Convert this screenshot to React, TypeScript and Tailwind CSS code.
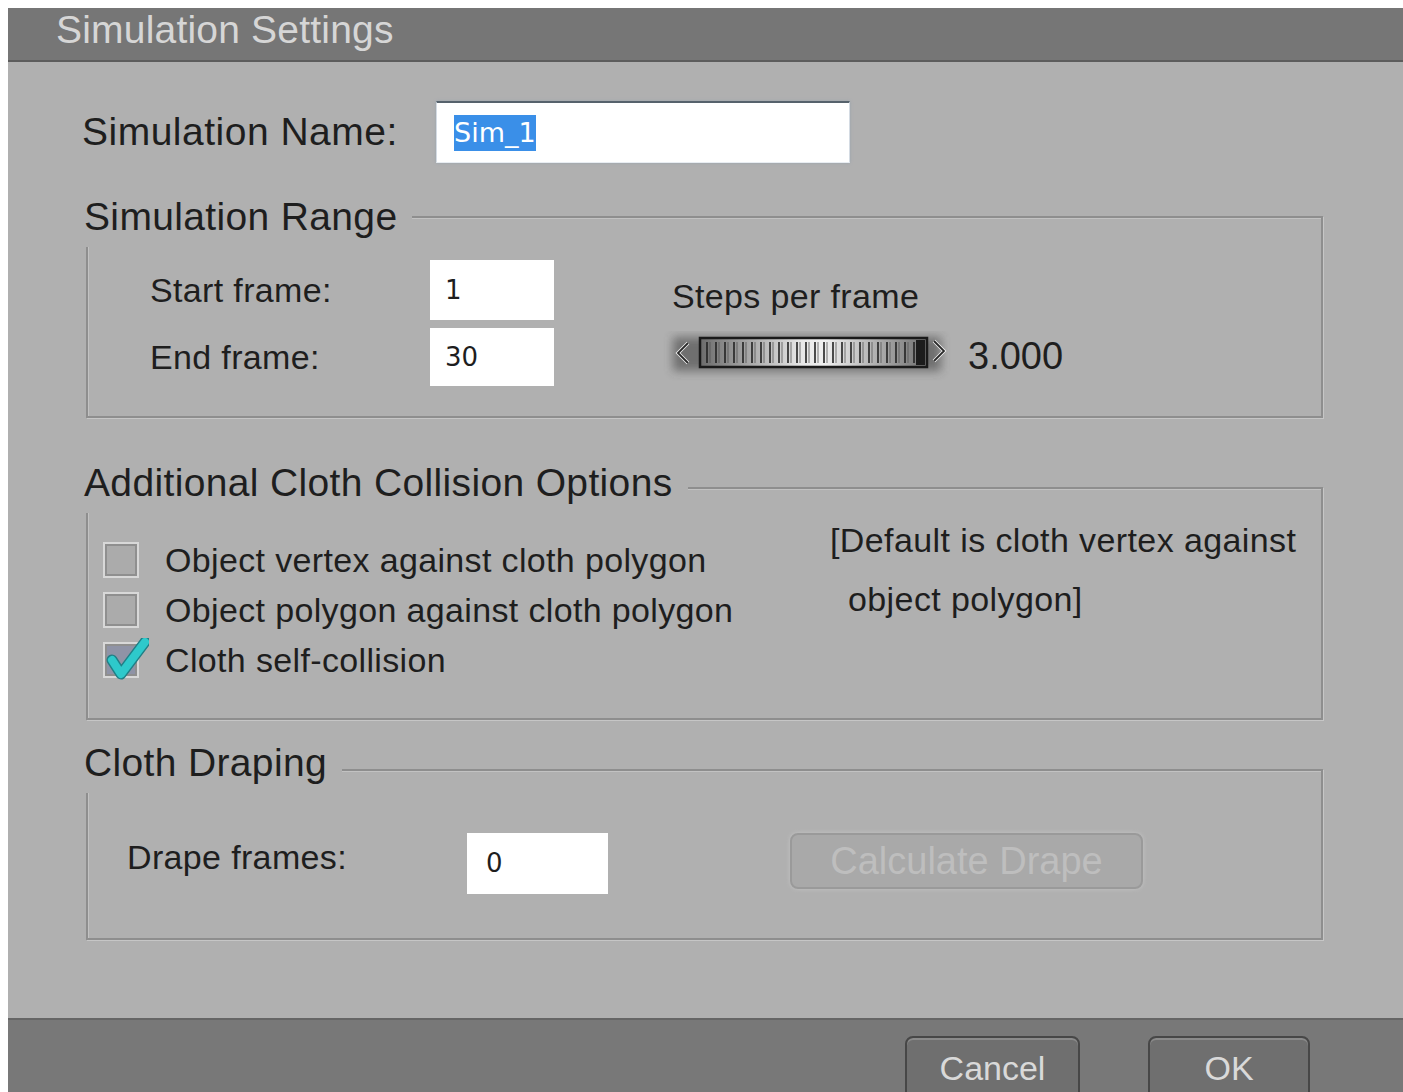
import React from "react"

const sans = "font-['Liberation_Sans',Arial,sans-serif]"
const field = "font-['DejaVu_Sans','Liberation_Sans',sans-serif]"

function GroupBox({
  title,
  titleTop,
  className,
  children,
}: {
  title: string
  titleTop: string
  className: string
  children: React.ReactNode
}) {
  return (
    <div
      className={`relative ml-[78px] w-[1237px] border-2 border-[#8e8e8e] shadow-[1px_1px_0_#c6c6c6,inset_1px_1px_0_#c2c2c2] ${className}`}
    >
      <span
        className={`absolute left-[-4px] ${titleTop} bg-[#b0b0b0] pr-[15px] pb-[8px] text-[39px] leading-[44px] tracking-[0.35px] text-[#1e1e1e]`}
      >
        {title}
      </span>
      {children}
    </div>
  )
}

function CheckBox({ checked }: { checked?: boolean }) {
  return (
    <div className="relative h-[36px] w-[36px] shrink-0">
      <div
        className={`h-full w-full border-2 border-[#d8d8d8] shadow-[inset_0_0_0_2px_#8f8f8f] ${
          checked ? "bg-[#8f93a6]" : "bg-[#ababab]"
        }`}
      />
      {checked && (
        <svg className="absolute left-[2px] top-[-4px]" width="44" height="42" viewBox="0 0 44 42">
          <path
            d="M7 22 L16 36 L40 4"
            fill="none"
            stroke="#1f7f86"
            strokeWidth="11"
            strokeLinecap="round"
            strokeLinejoin="round"
          />
          <path
            d="M7 22 L16 36 L40 4"
            fill="none"
            stroke="#2ec9cb"
            strokeWidth="8"
            strokeLinecap="round"
            strokeLinejoin="round"
          />
        </svg>
      )}
    </div>
  )
}

// ridged thumbwheel used for the steps-per-frame value
function StepWheel() {
  const ticks = Array.from({ length: 24 }, (_, i) => 52 + i * 9)
  return (
    <svg width="300" height="50" viewBox="0 0 300 50">
      <defs>
        <filter id="wheelBlur" x="-20%" y="-50%" width="140%" height="200%">
          <feGaussianBlur stdDeviation="5" />
        </filter>
        <linearGradient id="wheelFill" x1="0" x2="1" y1="0" y2="0">
          <stop offset="0" stopColor="#6c6c6c" />
          <stop offset="0.45" stopColor="#e8e8e8" />
          <stop offset="0.55" stopColor="#f0f0f0" />
          <stop offset="1" stopColor="#707070" />
        </linearGradient>
        <linearGradient id="wheelShine" x1="0" x2="1" y1="0" y2="0">
          <stop offset="0" stopColor="#ffffff" stopOpacity="0" />
          <stop offset="0.15" stopColor="#ffffff" stopOpacity="0.9" />
          <stop offset="0.85" stopColor="#ffffff" stopOpacity="0.9" />
          <stop offset="1" stopColor="#ffffff" stopOpacity="0" />
        </linearGradient>
      </defs>
      <rect x="18" y="6" width="268" height="34" fill="#3a3a3a" opacity="0.55" filter="url(#wheelBlur)" />
      <line x1="0" y1="41.5" x2="295" y2="41.5" stroke="url(#wheelShine)" strokeWidth="2" />
      <polyline points="33,12 23,22 33,32" fill="none" stroke="#f2f2f2" strokeWidth="3.5" />
      <polyline points="33,12 23,22 33,32" fill="none" stroke="#2a2a2a" strokeWidth="1.8" />
      <rect x="45" y="7" width="227" height="29" fill="url(#wheelFill)" stroke="#1a1a1a" strokeWidth="2.5" />
      {ticks.map((x) => (
        <g key={x}>
          <line x1={x} y1="11" x2={x} y2="32" stroke="#222" strokeWidth="1.6" />
          <line x1={x + 3} y1="11" x2={x + 3} y2="32" stroke="#555" strokeWidth="0.8" />
        </g>
      ))}
      <rect x="261" y="9" width="9" height="25" fill="#1c1c1c" />
      <polyline points="279,10 289,20 279,30" fill="none" stroke="#f2f2f2" strokeWidth="3.5" />
      <polyline points="279,10 289,20 279,30" fill="none" stroke="#2a2a2a" strokeWidth="1.8" />
    </svg>
  )
}

export default function App() {
  return (
    <div className={`h-[1092px] w-[1403px] overflow-hidden bg-white pl-2 pt-2 ${sans}`}>
      <div className="flex h-full flex-col">
        {/* title bar */}
        <div className="flex h-[54px] shrink-0 items-center border-b-2 border-[#5c5c5c] bg-[#767676] pb-[8px] pl-[48px]">
          <span className="text-[39px] leading-[44px] tracking-[0.2px] text-[#d6d6d6]">Simulation Settings</span>
        </div>

        {/* body */}
        <div className="flex h-[956px] shrink-0 flex-col bg-[#b0b0b0] text-[#1e1e1e]">
          <div className="ml-[74px] mt-[39px] flex h-[62px] items-center">
            <span className="w-[354px] text-[39px] leading-[44px] tracking-[0.5px]">Simulation Name:</span>
            <div className="flex h-[62px] w-[414px] items-center border-x border-b border-t-2 border-x-[#d4dbe3] border-b-[#e8edf2] border-t-[#56626c] bg-white pl-[17px] shadow-[0_0_3px_#9aa4ae]">
              <span className={`bg-[#3a8fe8] text-[27px] leading-[36px] text-white ${field}`}>Sim_1</span>
            </div>
          </div>

          <GroupBox title="Simulation Range" titleTop="-top-[23px]" className="mt-[53px] h-[202px]">
            <div className="flex pt-[42px]">
              <div className="grid grid-cols-[280px_124px] items-center gap-y-[8px] pl-[62px] text-[34px] leading-[40px] tracking-[0.35px]">
                <span>Start frame:</span>
                <div className={`flex h-[60px] items-center bg-white pl-[15px] text-[26px] tracking-normal ${field}`}>1</div>
                <span>End frame:</span>
                <div className={`flex h-[58px] items-center bg-white pl-[15px] text-[26px] tracking-normal ${field}`}>30</div>
              </div>
              <div className="ml-[101px] flex flex-col">
                <span className="mt-[16px] pl-[17px] text-[34px] leading-[40px] tracking-[0.35px]">Steps per frame</span>
                <div className="mt-[15px] flex items-center">
                  <StepWheel />
                  <span className="ml-[13px] text-[38px] leading-[44px]">3.000</span>
                </div>
              </div>
            </div>
          </GroupBox>

          <GroupBox
            title="Additional Cloth Collision Options"
            titleTop="-top-[28px]"
            className="mt-[69px] h-[233px]"
          >
            <div className="flex text-[34px] tracking-[0.35px]">
              <div className="flex w-[742px] flex-col pl-[15px] pt-[46px]">
                {[
                  { label: "Object vertex against cloth polygon", checked: false },
                  { label: "Object polygon against cloth polygon", checked: false },
                  { label: "Cloth self-collision", checked: true },
                ].map((row) => (
                  <div key={row.label} className="flex h-[50px] items-center gap-[26px]">
                    <CheckBox checked={row.checked} />
                    <span className="leading-[40px]">{row.label}</span>
                  </div>
                ))}
              </div>
              <div className="flex flex-col pt-[22px] leading-[59px] tracking-[0.4px]">
                <span>[Default is cloth vertex against</span>
                <span className="pl-[18px]">object polygon]</span>
              </div>
            </div>
          </GroupBox>

          <GroupBox title="Cloth Draping" titleTop="-top-[30px]" className="mt-[49px] h-[171px]">
            <div className="flex items-start pt-[62px]">
              <span className="mt-[4px] w-[379px] pl-[39px] text-[34px] leading-[40px] tracking-[0.35px]">Drape frames:</span>
              <div className={`flex h-[61px] w-[141px] items-center bg-white pl-[19px] text-[26px] ${field}`}>0</div>
              <button className="ml-[182px] flex h-[56px] w-[353px] items-center justify-center rounded-[8px] border-2 border-[#9a9a9a] bg-[#a9a9a9] text-[38px] text-[#bebebe] shadow-[0_0_4px_#c4c4c4]">
                Calculate Drape
              </button>
            </div>
          </GroupBox>
        </div>

        {/* button strip */}
        <div className="flex h-[74px] shrink-0 justify-end gap-[68px] border-t-2 border-[#656565] bg-[#787878] pr-[93px] pt-[16px]">
          <button className="flex h-[64px] w-[175px] shrink-0 items-center justify-center rounded-t-[8px] border-2 border-[#474747] bg-[#6f6f6f] text-[34px] text-[#d9d9d9] shadow-[inset_0_2px_0_#8a8a8a]">
            Cancel
          </button>
          <button className="flex h-[64px] w-[162px] shrink-0 items-center justify-center rounded-t-[8px] border-2 border-[#474747] bg-[#6f6f6f] text-[34px] text-[#d9d9d9] shadow-[inset_0_2px_0_#8a8a8a]">
            OK
          </button>
        </div>
      </div>
    </div>
  )
}
